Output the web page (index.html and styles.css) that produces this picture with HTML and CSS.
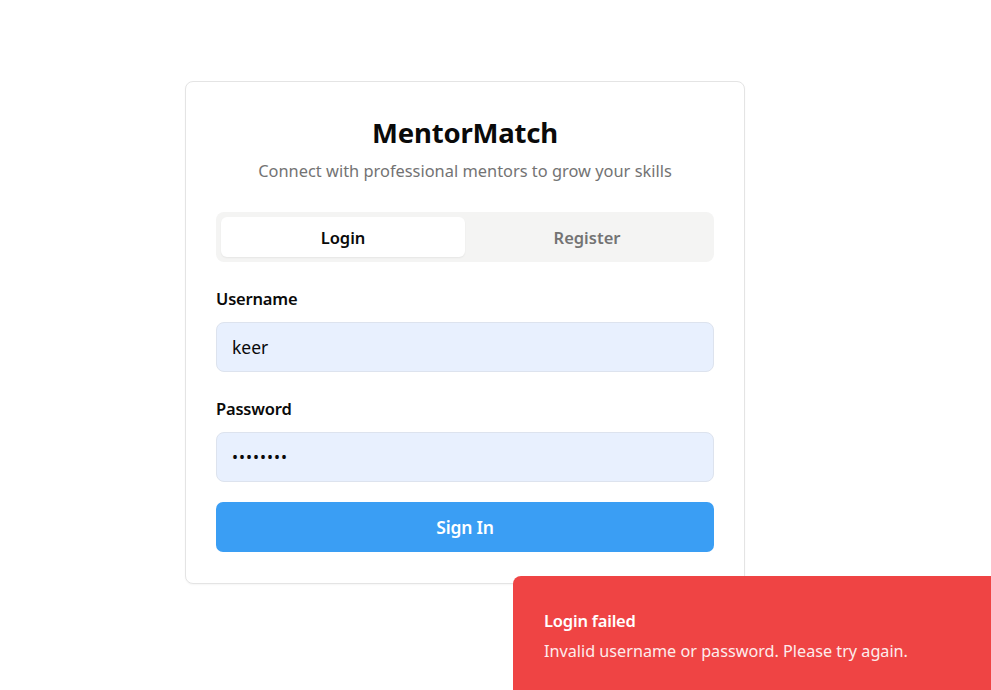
FILE: index.html
```html
<!DOCTYPE html>
<html lang="en">
<head>
<meta charset="utf-8">
<title>MentorMatch</title>
<link rel="stylesheet" href="styles.css">
</head>
<body>
<main class="page">
  <section class="card">
    <header class="card-head">
      <h1 class="title">MentorMatch</h1>
      <p class="subtitle">Connect with professional mentors to grow your skills</p>
    </header>
    <div class="tabs">
      <button class="tab tab-active">Login</button>
      <button class="tab">Register</button>
    </div>
    <form class="form">
      <div class="field">
        <label class="label">Username</label>
        <div class="input">keer</div>
      </div>
      <div class="field">
        <label class="label">Password</label>
        <div class="input input-pw">••••••••</div>
      </div>
      <button type="button" class="submit">Sign In</button>
    </form>
  </section>
</main>
<div class="toast">
  <div class="toast-title">Login failed</div>
  <div class="toast-desc">Invalid username or password. Please try again.</div>
</div>
</body>
</html>
```
FILE: styles.css
```css
* { box-sizing: border-box; }
html, body { margin: 0; padding: 0; background: #ffffff; }
body {
  font-family: "Noto Sans", "Open Sans", "Liberation Sans", sans-serif;
  color: #0a0a0a;
  width: 991px;
  height: 690px;
  overflow: hidden;
}
.page {
  padding: 81px 0 0 185px;
}
.card {
  width: 560px;
  border: 1px solid #e4e4e4;
  border-radius: 8px;
  padding: 30px 30px 31px 30px;
  background: #fff;
  box-shadow: 0 1px 2px rgba(0,0,0,0.04);
}
.card-head {
  text-align: center;
  padding-top: 4px;
}
.title {
  margin: 0;
  font-size: 27.5px;
  line-height: 34px;
  font-weight: 700;
  letter-spacing: -0.2px;
}
.subtitle {
  margin: 9px 0 0;
  font-size: 16.4px;
  line-height: 24px;
  color: #737373;
}
.tabs {
  margin-top: 29px;
  display: grid;
  grid-template-columns: 1fr 1fr;
  background: #f4f4f3;
  border-radius: 8px;
  padding: 5px;
  height: 50px;
}
.tab {
  border: 0;
  background: transparent;
  font-family: inherit;
  font-size: 16.5px;
  font-weight: 600;
  color: #737373;
  border-radius: 6px;
  height: 40px;
  padding: 0;
}
.tab-active {
  background: #fff;
  color: #0a0a0a;
  box-shadow: 0 1px 2px rgba(0,0,0,0.06);
}
.form {
  display: flex;
  flex-direction: column;
  margin-top: 25px;
}
.field {
  display: flex;
  flex-direction: column;
  gap: 11px;
  margin-bottom: 25px;
}
.label {
  font-size: 16.5px;
  font-weight: 600;
  line-height: 24px;
  letter-spacing: -0.2px;
}
.input {
  height: 50px;
  background: #e8f0fe;
  border: 1px solid #dde3ee;
  border-radius: 8px;
  padding: 0 15px;
  display: flex;
  align-items: center;
  font-size: 17.5px;
  color: #0a0a0a;
}
.input-pw {
  font-size: 16px;
  letter-spacing: 1px;
}
.field:nth-child(2) { margin-bottom: 20px; }
.submit {
  height: 50px;
  border: 0;
  border-radius: 7px;
  background: #3a9ef4;
  color: #fff;
  font-family: inherit;
  font-size: 17.5px;
  font-weight: 600;
  letter-spacing: -0.2px;
}
.toast {
  position: fixed;
  left: 513px;
  top: 576px;
  right: 0;
  bottom: 0;
  background: #ef4444;
  color: #fff;
  border-radius: 8px 0 0 0;
  padding: 33px 30px 0 31px;
}
.toast-title {
  font-size: 16.5px;
  font-weight: 600;
  line-height: 24px;
  letter-spacing: -0.2px;
}
.toast-desc {
  margin-top: 6px;
  font-size: 16.2px;
  line-height: 24px;
  opacity: 0.9;
}
```
